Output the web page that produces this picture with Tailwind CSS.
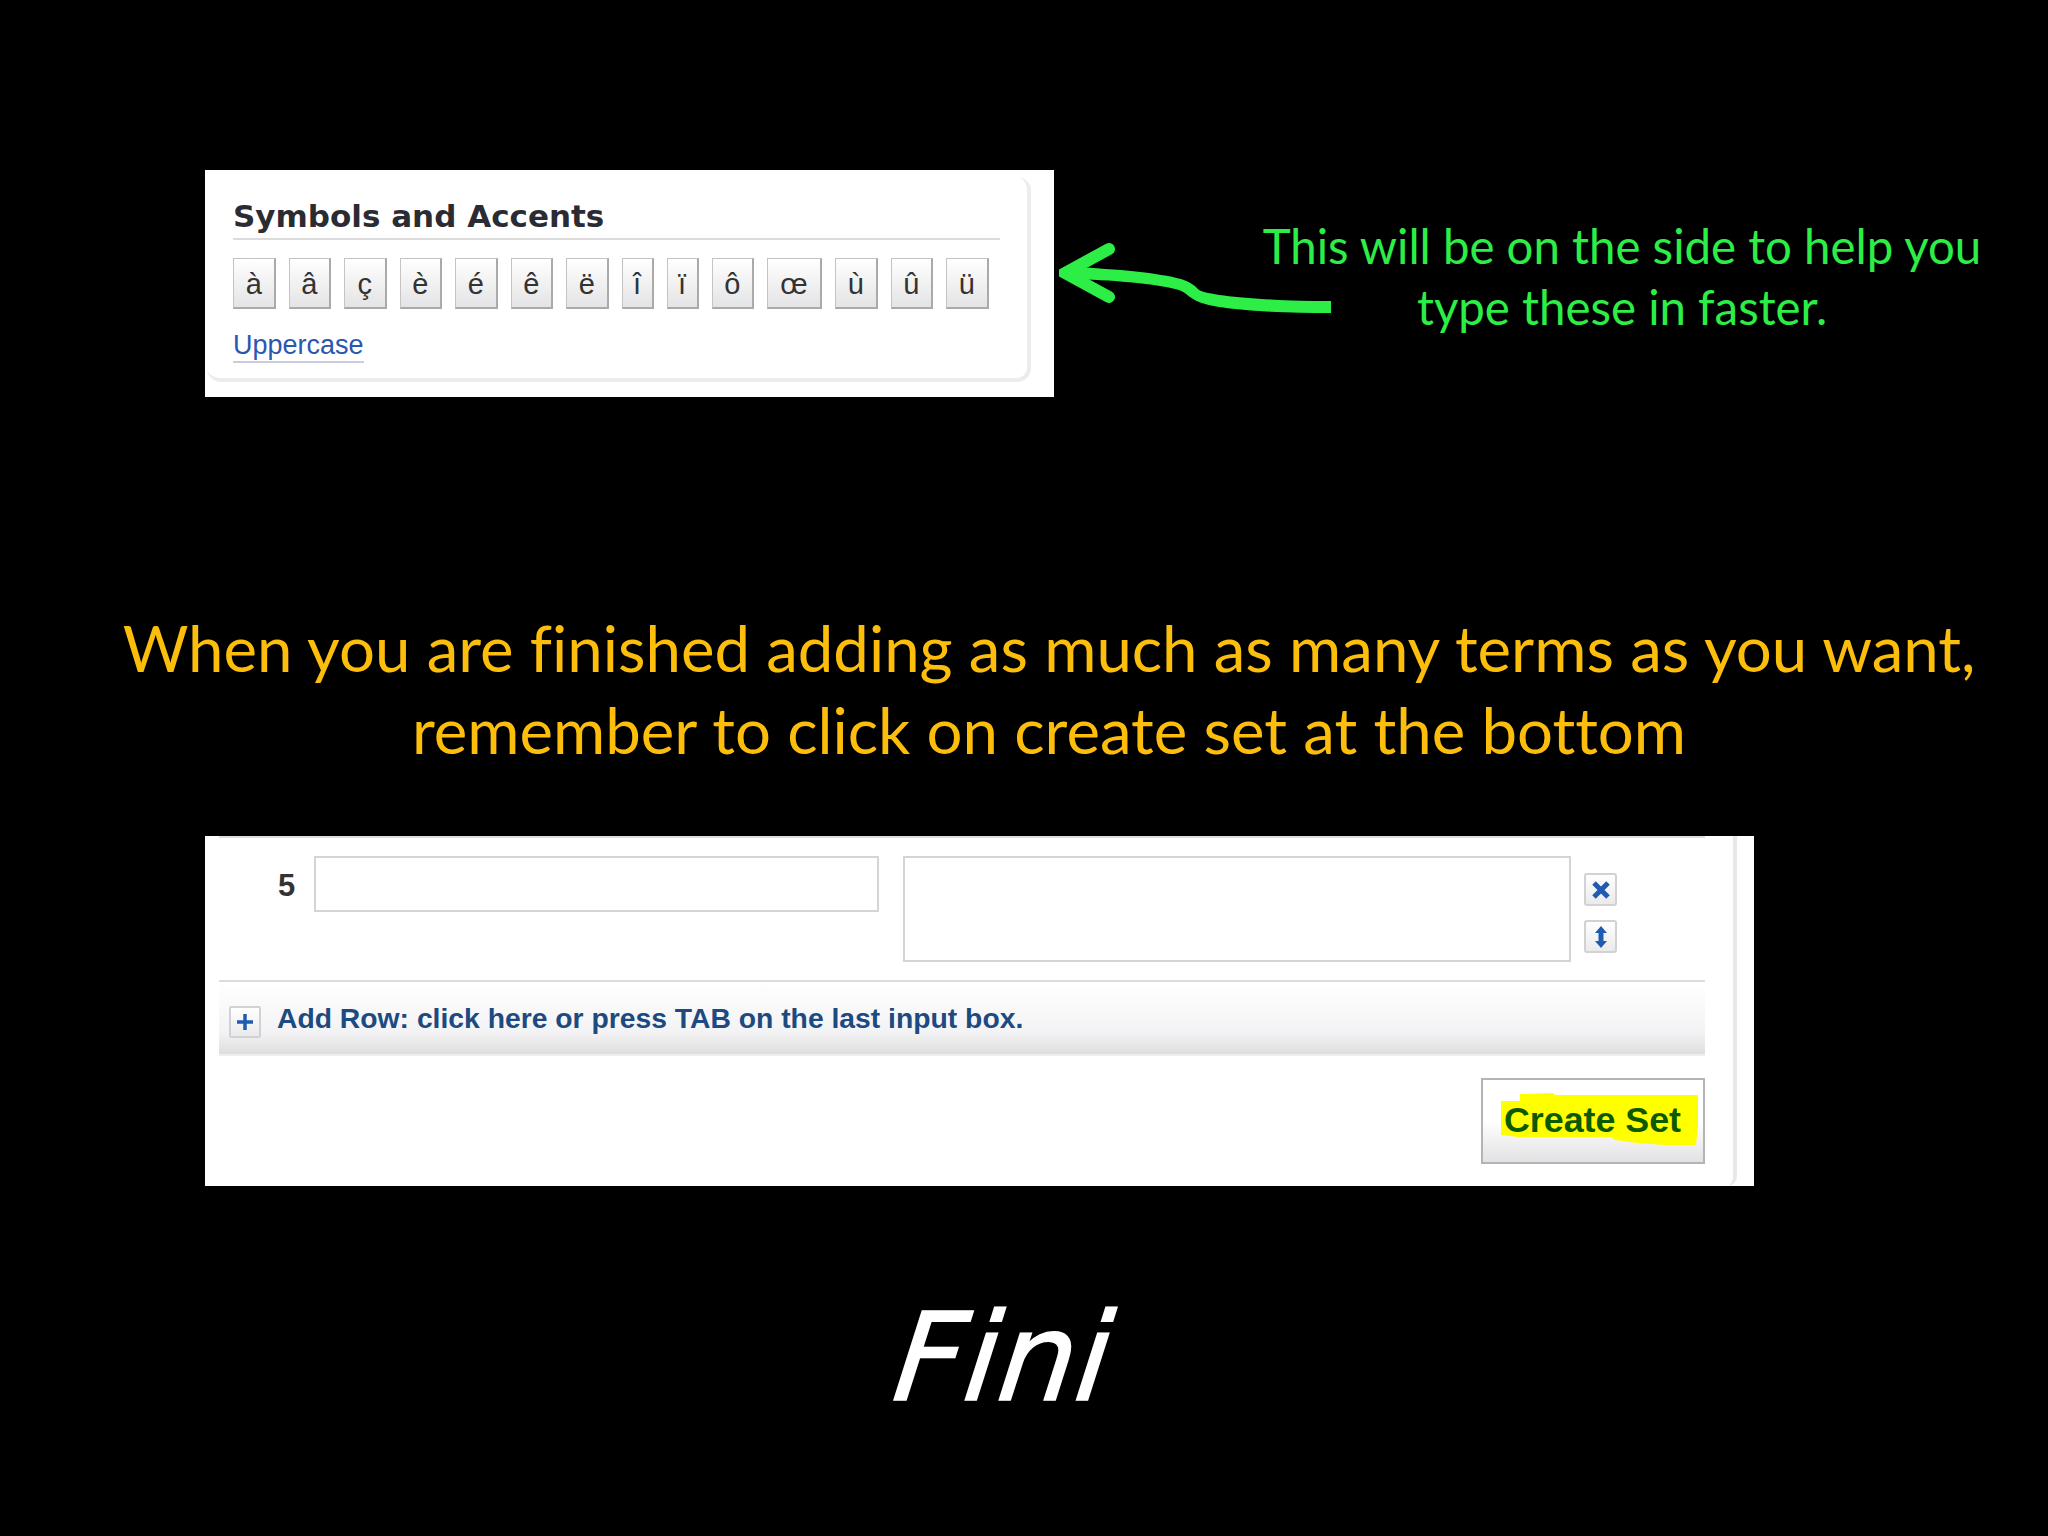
<!DOCTYPE html>
<html lang="en">
<head>
    <meta charset="UTF-8">
    <title>Fini</title>
    <script src="https://cdn.jsdelivr.net/npm/@tailwindcss/browser@4"></script>
</head>
<body class="bg-black">
<div class="w-[2048px] h-[1536px] overflow-hidden bg-black pt-[170px] font-['Lato',sans-serif] [font-variant-ligatures:none]">

    <!-- symbols panel, arrow and note -->
    <div class="flex items-start pl-[205px]">
        <div class="w-[849px] h-[227px] shrink-0 bg-white pt-[7px] pl-[2px]">
            <div class="w-[824px] h-[205px] rounded-[14px] border-r-4 border-b-4 border-[#ececf0] pl-[26px] pt-[19px]">
                <h2 class="w-[767px] h-[44px] border-b-2 border-[#dcdcdc] font-['DejaVu_Sans',sans-serif] font-bold text-[31px] leading-[40px] text-[#2b2b33] whitespace-nowrap">Symbols and Accents</h2>
                <div class="flex gap-[13px] mt-[18px] font-['Liberation_Sans',sans-serif] text-[29px] text-[#333]">
                    <button class="w-[42.5px] h-[51px] pt-[3px] border border-[#c4c4c4] border-r-2 border-b-2 border-r-[#aaa] border-b-[#aaa] bg-gradient-to-b from-white to-[#e4e4e6]">à</button>
                    <button class="w-[42.5px] h-[51px] pt-[3px] border border-[#c4c4c4] border-r-2 border-b-2 border-r-[#aaa] border-b-[#aaa] bg-gradient-to-b from-white to-[#e4e4e6]">â</button>
                    <button class="w-[42.5px] h-[51px] pt-[3px] border border-[#c4c4c4] border-r-2 border-b-2 border-r-[#aaa] border-b-[#aaa] bg-gradient-to-b from-white to-[#e4e4e6]">ç</button>
                    <button class="w-[42.5px] h-[51px] pt-[3px] border border-[#c4c4c4] border-r-2 border-b-2 border-r-[#aaa] border-b-[#aaa] bg-gradient-to-b from-white to-[#e4e4e6]">è</button>
                    <button class="w-[42.5px] h-[51px] pt-[3px] border border-[#c4c4c4] border-r-2 border-b-2 border-r-[#aaa] border-b-[#aaa] bg-gradient-to-b from-white to-[#e4e4e6]">é</button>
                    <button class="w-[42.5px] h-[51px] pt-[3px] border border-[#c4c4c4] border-r-2 border-b-2 border-r-[#aaa] border-b-[#aaa] bg-gradient-to-b from-white to-[#e4e4e6]">ê</button>
                    <button class="w-[42.5px] h-[51px] pt-[3px] border border-[#c4c4c4] border-r-2 border-b-2 border-r-[#aaa] border-b-[#aaa] bg-gradient-to-b from-white to-[#e4e4e6]">ë</button>
                    <button class="w-[32px] h-[51px] pt-[3px] border border-[#c4c4c4] border-r-2 border-b-2 border-r-[#aaa] border-b-[#aaa] bg-gradient-to-b from-white to-[#e4e4e6]">î</button>
                    <button class="w-[32px] h-[51px] pt-[3px] border border-[#c4c4c4] border-r-2 border-b-2 border-r-[#aaa] border-b-[#aaa] bg-gradient-to-b from-white to-[#e4e4e6]">ï</button>
                    <button class="w-[42.5px] h-[51px] pt-[3px] border border-[#c4c4c4] border-r-2 border-b-2 border-r-[#aaa] border-b-[#aaa] bg-gradient-to-b from-white to-[#e4e4e6]">ô</button>
                    <button class="w-[55px] h-[51px] pt-[3px] border border-[#c4c4c4] border-r-2 border-b-2 border-r-[#aaa] border-b-[#aaa] bg-gradient-to-b from-white to-[#e4e4e6]">œ</button>
                    <button class="w-[42.5px] h-[51px] pt-[3px] border border-[#c4c4c4] border-r-2 border-b-2 border-r-[#aaa] border-b-[#aaa] bg-gradient-to-b from-white to-[#e4e4e6]">ù</button>
                    <button class="w-[42.5px] h-[51px] pt-[3px] border border-[#c4c4c4] border-r-2 border-b-2 border-r-[#aaa] border-b-[#aaa] bg-gradient-to-b from-white to-[#e4e4e6]">û</button>
                    <button class="w-[42.5px] h-[51px] pt-[3px] border border-[#c4c4c4] border-r-2 border-b-2 border-r-[#aaa] border-b-[#aaa] bg-gradient-to-b from-white to-[#e4e4e6]">ü</button>
                </div>
                <a class="inline-block mt-[21px] font-['Liberation_Sans',sans-serif] text-[27px] leading-[31px] text-[#2a57b0] border-b-2 border-[#ccd]">Uppercase</a>
            </div>
        </div>

        <svg class="w-[275px] h-[80px] shrink-0 ml-[5px] mt-[70px]" viewBox="0 0 275 80" fill="#2ded47">
            <path d="M50 9 L6 33 L50 57" fill="none" stroke="#2ded47" stroke-width="12" stroke-linecap="round" stroke-linejoin="miter"/>
            <path d="M12 27 C60 29 100 33 122 39 C132 42 136 46 140 50 C150 56 210 61 272 61 L272 73 C215 73 160 70 140 62 C130 58 128 53 120 50 C95 43 50 40 12 39 Z"/>
        </svg>

        <p class="w-[740px] shrink-0 ml-[-82px] mt-[45px] text-center text-[#2ded47] text-[47.4px] leading-[61px] whitespace-nowrap">This will be on the side to help you<br>type these in faster.</p>
    </div>

    <!-- reminder -->
    <p class="mt-[210px] pl-[50px] text-center text-[#fcbd0b] text-[63.5px] leading-[82px] whitespace-nowrap">When you are finished adding as much as many terms as you want,<br>remember to click on create set at the bottom</p>

    <!-- last row of the form -->
    <div class="ml-[205px] mt-[65px] w-[1549px] h-[350px] bg-white">
        <div class="w-[1532px] h-[350px] pl-[14px] border-r-4 border-[#e8e8ec] rounded-br-[10px]">
            <div class="w-[1486px] border-t-2 border-[#dedee0]">
                <div class="flex items-start h-[142px] pt-[18px]">
                    <span class="w-[95px] pl-[59px] pt-[12px] font-['Liberation_Sans',sans-serif] font-bold text-[31px] leading-[36px] text-[#333]">5</span>
                    <div class="w-[565px] h-[56px] border-2 border-[#d4d4d6]"></div>
                    <div class="w-[668px] h-[106px] ml-[24px] border-2 border-[#d4d4d6]"></div>
                    <div class="flex flex-col gap-[14px] ml-[13px] mt-[17px]">
                        <button class="w-[33px] h-[33px] rounded-[3px] border-2 border-[#d2d2d4] bg-gradient-to-b from-white to-[#eaeaec] flex items-center justify-center">
                            <svg class="w-[20px] h-[20px]" viewBox="0 0 20 20"><path d="M3 3 L17 17 M17 3 L3 17" stroke="#1f5bb0" stroke-width="5"/></svg>
                        </button>
                        <button class="w-[33px] h-[33px] rounded-[3px] border-2 border-[#d2d2d4] bg-gradient-to-b from-white to-[#eaeaec] flex items-center justify-center">
                            <svg class="w-[20px] h-[24px]" viewBox="0 0 20 24" fill="#1f5bb0"><path d="M10 1 L16 8 L12.5 8 L12.5 16 L16 16 L10 23 L4 16 L7.5 16 L7.5 8 L4 8 Z"/></svg>
                        </button>
                    </div>
                </div>
                <div class="flex items-center h-[76px] border-t-2 border-b-2 border-t-[#dcdcde] border-b-[#eeeef0] pl-[10px] bg-gradient-to-b from-white via-[#f3f3f5] via-70% to-[#dededf]">
                    <button class="w-[32px] h-[32px] mt-[8px] rounded-[2px] border-2 border-[#d2d2d4] bg-gradient-to-b from-white to-[#eaeaec] flex items-center justify-center">
                        <svg class="w-[18px] h-[18px]" viewBox="0 0 18 18"><path d="M9 1 V17 M1 9 H17" stroke="#1f5bb0" stroke-width="3.5"/></svg>
                    </button>
                    <span class="ml-[16px] font-['Liberation_Sans',sans-serif] font-bold text-[28.3px] text-[#1d4a80] whitespace-nowrap">Add Row: click here or press TAB on the last input box.</span>
                </div>
                <div class="flex justify-end pt-[22px]">
                    <button class="w-[224px] h-[86px] border-2 border-[#b4b4b6] bg-gradient-to-b from-white via-white via-50% to-[#e2e2e4] pl-[18px] pt-[13px] flex items-start">
                        <span class="flex items-center justify-center w-[197px] h-[52px] pt-[3px] bg-[#ffff00] font-['Liberation_Sans',sans-serif] font-bold text-[35.8px] text-[#0b5a00] whitespace-nowrap pr-[14px] [clip-path:polygon(0px_8px,19px_8px,19px_1px,52px_0px,54px_2px,197px_2px,197px_34px,195px_52px,163px_52px,136px_50px,114px_47px,110px_44px,17px_44px,0px_42px)]">Create Set</span>
                    </button>
                </div>
            </div>
        </div>
    </div>

    <!-- sign off -->
    <p class="mt-[107px] pr-[40px] text-center text-white italic font-['DejaVu_Sans',sans-serif] text-[122px] leading-[130px] [-webkit-text-stroke:1.5px_#fff]"><span class="inline-block skew-x-[-7deg]">Fini</span></p>
</div>
</body>
</html>
